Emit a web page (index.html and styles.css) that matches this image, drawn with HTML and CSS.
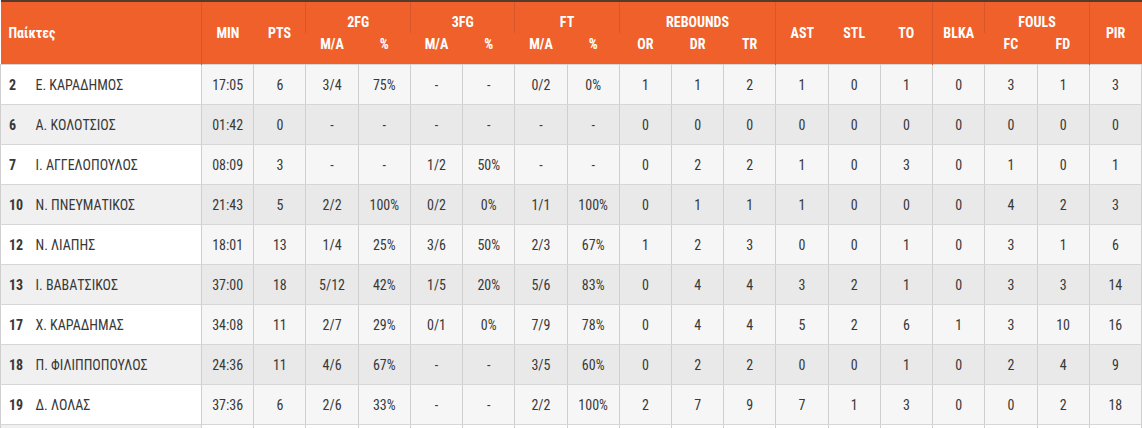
FILE: index.html
```html
<!DOCTYPE html>
<html lang="el">
<head>
<meta charset="utf-8">
<title>Box score</title>
<link rel="stylesheet" href="styles.css">
</head>
<body>
<table class="box">
  <colgroup>
    <col class="c-no"><col class="c-name">
    <col><col><col><col><col><col><col><col><col><col><col><col><col><col><col><col><col><col>
  </colgroup>
  <thead>
    <tr class="h1">
      <th class="players" colspan="2" rowspan="2">Παίκτες</th>
      <th class="sep" rowspan="2">MIN</th>
      <th rowspan="2">PTS</th>
      <th class="sep grp" colspan="2">2FG</th>
      <th class="sep grp" colspan="2">3FG</th>
      <th class="sep grp" colspan="2">FT</th>
      <th class="sep grp" colspan="3">REBOUNDS</th>
      <th class="sep" rowspan="2">AST</th>
      <th rowspan="2">STL</th>
      <th rowspan="2">TO</th>
      <th class="sep" rowspan="2">BLKA</th>
      <th class="sep grp" colspan="2">FOULS</th>
      <th class="sep" rowspan="2">PIR</th>
    </tr>
    <tr class="h2">
      <th class="sub">M/A</th><th class="sub">%</th>
      <th class="sub">M/A</th><th class="sub">%</th>
      <th class="sub">M/A</th><th class="sub">%</th>
      <th class="sub">OR</th><th class="sub">DR</th><th class="sub">TR</th>
      <th class="sub">FC</th><th class="sub">FD</th>
    </tr>
  </thead>
  <tbody>
    <tr><td class="no">2</td><td class="name">Ε. ΚΑΡΑΔΗΜΟΣ</td><td>17:05</td><td>6</td><td>3/4</td><td>75%</td><td>-</td><td>-</td><td>0/2</td><td>0%</td><td>1</td><td>1</td><td>2</td><td>1</td><td>0</td><td>1</td><td>0</td><td>3</td><td>1</td><td>3</td></tr>
    <tr><td class="no">6</td><td class="name">Α. ΚΟΛΟΤΣΙΟΣ</td><td>01:42</td><td>0</td><td>-</td><td>-</td><td>-</td><td>-</td><td>-</td><td>-</td><td>0</td><td>0</td><td>0</td><td>0</td><td>0</td><td>0</td><td>0</td><td>0</td><td>0</td><td>0</td></tr>
    <tr><td class="no">7</td><td class="name">Ι. ΑΓΓΕΛΟΠΟΥΛΟΣ</td><td>08:09</td><td>3</td><td>-</td><td>-</td><td>1/2</td><td>50%</td><td>-</td><td>-</td><td>0</td><td>2</td><td>2</td><td>1</td><td>0</td><td>3</td><td>0</td><td>1</td><td>0</td><td>1</td></tr>
    <tr><td class="no">10</td><td class="name">Ν. ΠΝΕΥΜΑΤΙΚΟΣ</td><td>21:43</td><td>5</td><td>2/2</td><td>100%</td><td>0/2</td><td>0%</td><td>1/1</td><td>100%</td><td>0</td><td>1</td><td>1</td><td>1</td><td>0</td><td>0</td><td>0</td><td>4</td><td>2</td><td>3</td></tr>
    <tr><td class="no">12</td><td class="name">Ν. ΛΙΑΠΗΣ</td><td>18:01</td><td>13</td><td>1/4</td><td>25%</td><td>3/6</td><td>50%</td><td>2/3</td><td>67%</td><td>1</td><td>2</td><td>3</td><td>0</td><td>0</td><td>1</td><td>0</td><td>3</td><td>1</td><td>6</td></tr>
    <tr><td class="no">13</td><td class="name">Ι. ΒΑΒΑΤΣΙΚΟΣ</td><td>37:00</td><td>18</td><td>5/12</td><td>42%</td><td>1/5</td><td>20%</td><td>5/6</td><td>83%</td><td>0</td><td>4</td><td>4</td><td>3</td><td>2</td><td>1</td><td>0</td><td>3</td><td>3</td><td>14</td></tr>
    <tr><td class="no">17</td><td class="name">Χ. ΚΑΡΑΔΗΜΑΣ</td><td>34:08</td><td>11</td><td>2/7</td><td>29%</td><td>0/1</td><td>0%</td><td>7/9</td><td>78%</td><td>0</td><td>4</td><td>4</td><td>5</td><td>2</td><td>6</td><td>1</td><td>3</td><td>10</td><td>16</td></tr>
    <tr><td class="no">18</td><td class="name">Π. ΦΙΛΙΠΠΟΠΟΥΛΟΣ</td><td>24:36</td><td>11</td><td>4/6</td><td>67%</td><td>-</td><td>-</td><td>3/5</td><td>60%</td><td>0</td><td>2</td><td>2</td><td>0</td><td>0</td><td>1</td><td>0</td><td>2</td><td>4</td><td>9</td></tr>
    <tr><td class="no">19</td><td class="name">Δ. ΛΟΛΑΣ</td><td>37:36</td><td>6</td><td>2/6</td><td>33%</td><td>-</td><td>-</td><td>2/2</td><td>100%</td><td>2</td><td>7</td><td>9</td><td>7</td><td>1</td><td>3</td><td>0</td><td>0</td><td>2</td><td>18</td></tr>
    <tr class="blank"><td class="no"></td><td class="name"></td><td></td><td></td><td></td><td></td><td></td><td></td><td></td><td></td><td></td><td></td><td></td><td></td><td></td><td></td><td></td><td></td><td></td><td></td></tr>
  </tbody>
</table>
</body>
</html>
```
FILE: styles.css
```css
html, body {
  margin: 0;
  padding: 0;
  background: #ffffff;
}

body {
  width: 1142px;
  height: 428px;
  overflow: hidden;
  font-family: "Roboto Condensed", "Liberation Sans Narrow", Roboto, "Liberation Sans", sans-serif;
  font-size: 14px;
  color: #383838;
}

.box {
  width: 1142px;
  table-layout: fixed;
  border-collapse: collapse;
  border-top: 2px solid #553a2e;
}

.c-no { width: 35px; }
.c-name { width: 166px; }

.box thead th {
  background: #f0602a;
  color: #ffffff;
  font-weight: 700;
  font-size: 14px;
  line-height: 16px;
  padding: 0;
  text-align: center;
}

.box thead .h1 th { height: 28px; }
.box thead .h2 th { height: 28px; }

.box thead th.sep { border-left: 1px solid #d8572a; }

.box thead th.players {
  text-align: left;
  padding-left: 8px;
}

.box thead th.grp {
  vertical-align: bottom;
  padding-bottom: 3px;
}

.box thead th.sub {
  vertical-align: top;
  padding-top: 3px;
}

.box tbody td {
  height: 39px;
  padding: 0;
  text-align: center;
  vertical-align: middle;
  background: #f6f6f6;
  border: 1px solid #cfcfcf;
  border-top-color: #d6d6d6;
  border-bottom-color: #d6d6d6;
}

.box tbody td.no {
  text-align: left;
  padding-left: 8px;
  font-weight: 700;
  background: #ffffff;
  border-right: none;
}

.box tbody td.name {
  text-align: left;
  background: #ffffff;
  border-left: none;
}

.box tbody tr:nth-child(even) td { background: #e9e9e9; }
.box tbody tr:nth-child(even) td.no,
.box tbody tr:nth-child(even) td.name { background: #f0f0f0; }

.box tbody tr.blank td { background: #ffffff; }
```
